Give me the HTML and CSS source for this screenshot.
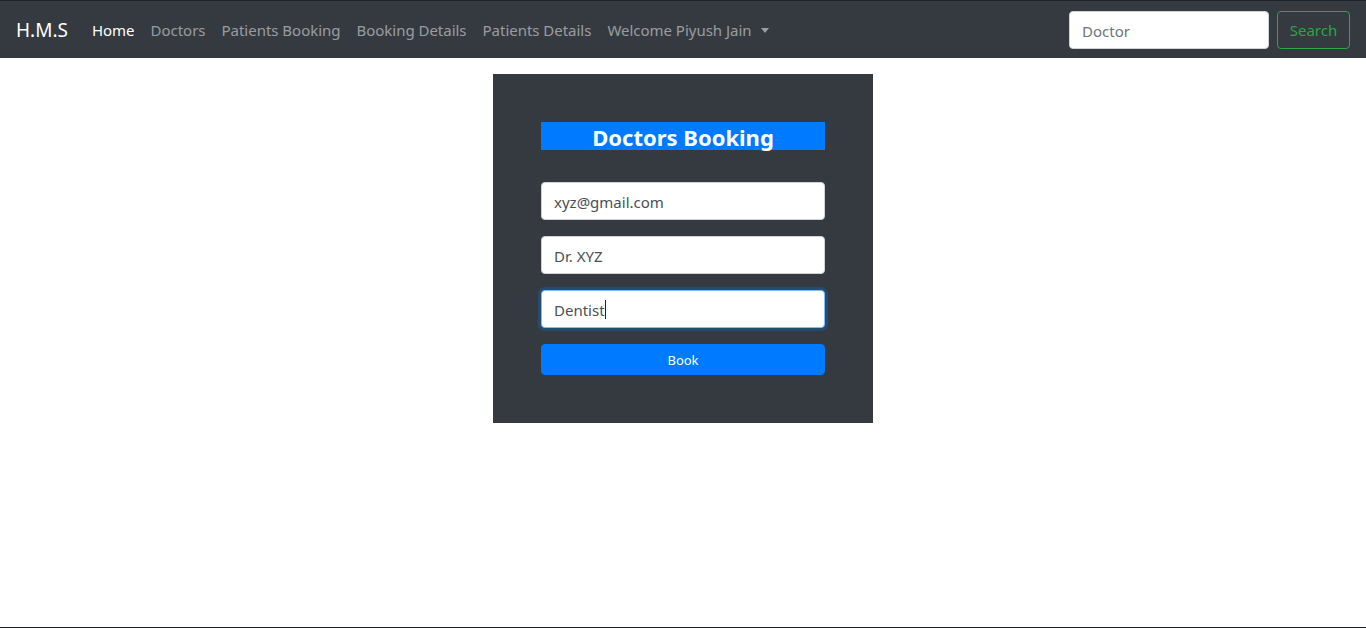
FILE: index.html
```html
<!DOCTYPE html>
<html lang="en">
<head>
<meta charset="utf-8">
<title>H.M.S</title>
<link rel="stylesheet" href="styles.css">
</head>
<body>
<nav class="navbar">
  <a class="brand" href="#">H.M.S</a>
  <ul class="nav">
    <li><a class="nav-link active" href="#">Home</a></li>
    <li><a class="nav-link" href="#">Doctors</a></li>
    <li><a class="nav-link" href="#">Patients Booking</a></li>
    <li><a class="nav-link" href="#">Booking Details</a></li>
    <li><a class="nav-link" href="#">Patients Details</a></li>
    <li><a class="nav-link dropdown" href="#">Welcome Piyush Jain<span class="caret"></span></a></li>
  </ul>
  <form class="search">
    <input class="search-input" type="text" placeholder="Doctor">
    <button class="search-btn" type="button">Search</button>
  </form>
</nav>
<main class="main">
  <div class="card">
    <h3 class="card-title">Doctors Booking</h3>
    <input class="field" type="text" value="xyz@gmail.com">
    <input class="field" type="text" value="Dr. XYZ">
    <div class="field focused"><span>Dentist</span><span class="cursor"></span></div>
    <button class="book" type="button">Book</button>
  </div>
</main>
<div class="bottom-line"></div>
</body>
</html>
```
FILE: styles.css
```css
* { box-sizing: border-box; }
html, body { height: 100%; }
body {
  margin: 0;
  font-family: "Noto Sans", "Open Sans", sans-serif;
  font-size: 16px;
  color: #212529;
  background: #fff;
  border-top: 1px solid #1f2326;
  display: flex;
  flex-direction: column;
}
.navbar {
  height: 57px;
  background: #343a40;
  display: flex;
  align-items: center;
  padding: 0 16px;
}
.brand {
  color: #fff;
  font-size: 19px;
  text-decoration: none;
  margin-right: 16px;
  padding-top: 1px;
}
.nav {
  list-style: none;
  margin: 0;
  padding: 0;
  display: flex;
  flex: 1;
}
.nav-link {
  display: block;
  padding: 9px 8px 8px;
  font-size: 15px;
  letter-spacing: -0.02px;
  color: rgba(255,255,255,.5);
  text-decoration: none;
}
.nav-link.active { color: #fff; }
.caret {
  display: inline-block;
  margin-left: 9px;
  vertical-align: 3px;
  border-top: 5px solid rgba(255,255,255,.5);
  border-left: 4.5px solid transparent;
  border-right: 4.5px solid transparent;
}
.search { display: flex; gap: 8px; }
.search-input {
  width: 200px;
  height: 38px;
  border: 1px solid #ced4da;
  border-radius: 4px;
  padding: 7px 12px 5px;
  font: inherit;
  font-size: 15px;
  color: #495057;
}
.search-input::placeholder { color: #6c757d; }
.search-btn {
  height: 38px;
  width: 73px;
  background: transparent;
  border: 1px solid #28a745;
  border-radius: 4px;
  color: #28a745;
  font: inherit;
  font-size: 15px;
}
.main {
  flex: 1;
  display: flex;
  justify-content: center;
  align-items: flex-start;
  padding-top: 16px;
}
.card {
  width: 380px;
  background: #343a40;
  padding: 48px;
  display: flex;
  flex-direction: column;
  gap: 16px;
}
.card-title {
  margin: 0 0 16px;
  height: 28px;
  line-height: 30px;
  background: #007bff;
  color: #fff;
  text-align: center;
  font-size: 22px;
  font-weight: 700;
}
.field {
  height: 38px;
  border: 1px solid #ced4da;
  border-radius: 4px;
  padding: 1px 12px 0;
  font: inherit;
  font-size: 15px;
  color: #495057;
  background: #fff;
  display: flex;
  align-items: center;
}
.focused {
  border-color: #80bdff;
  box-shadow: 0 0 0 3px rgba(0,123,255,.25);
}
.cursor {
  width: 1px;
  height: 19px;
  background: #212529;
}
.book {
  height: 31px;
  background: #007bff;
  border: 1px solid #007bff;
  border-radius: 4px;
  color: #fff;
  font: inherit;
  font-size: 13px;
}
.bottom-line {
  height: 1px;
  background: #1f2326;
}
```
